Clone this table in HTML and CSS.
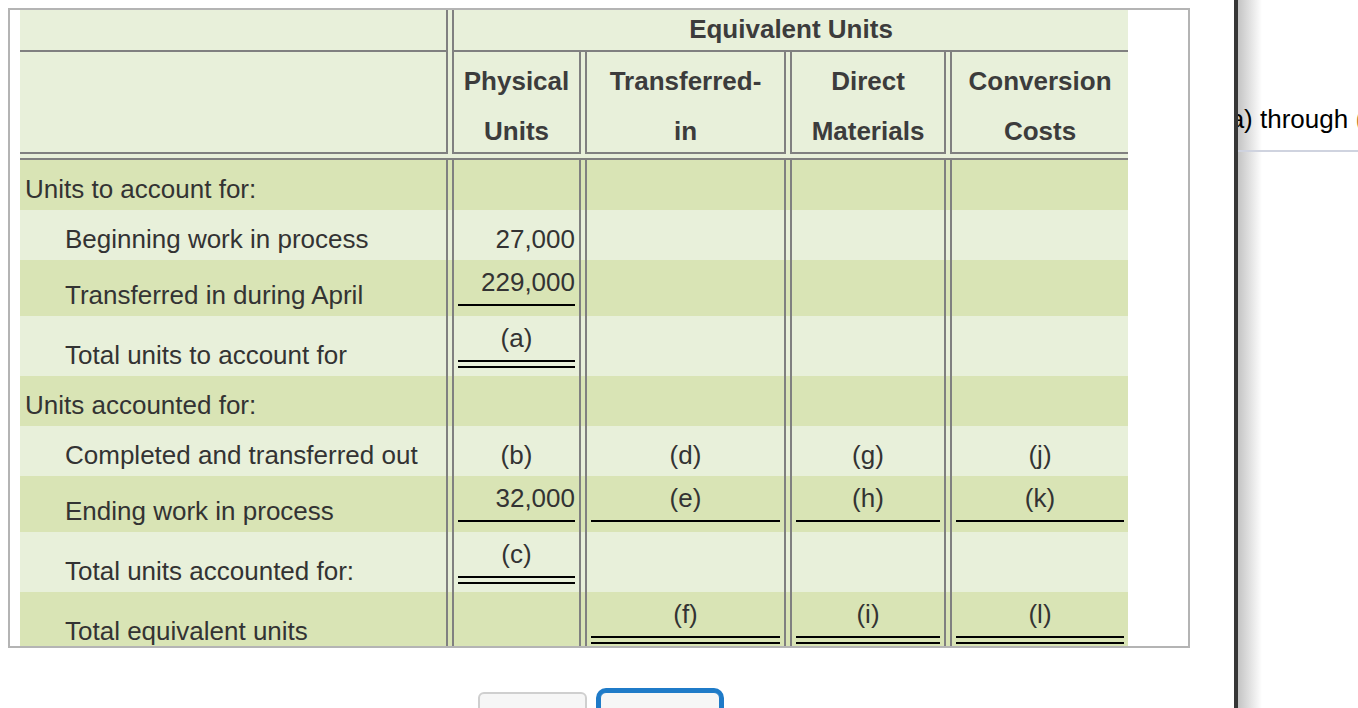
FILE: index.html
```html
<!DOCTYPE html>
<html>
<head>
<meta charset="utf-8">
<title>Equivalent Units</title>
<link rel="stylesheet" href="styles.css">
</head>
<body>
<div class="page">
  <div class="main">
    <div class="frame">
      <div class="tbl">
        <div class="hrow h1">
          <div class="c lab"></div>
          <div class="c span">Equivalent Units</div>
        </div>
        <div class="hrow h2">
          <div class="c lab"></div>
          <div class="c phys">Physical<br>Units</div>
          <div class="c tin">Transferred-<br>in</div>
          <div class="c dm">Direct<br>Materials</div>
          <div class="c cc">Conversion<br>Costs</div>
        </div>
        <div class="hgap"></div>
        <div class="body">
          <div class="row dark r50">
            <div class="c lab">Units to account for:</div>
            <div class="c phys"></div>
            <div class="c tin"></div>
            <div class="c dm"></div>
            <div class="c cc"></div>
          </div>
          <div class="row light r50">
            <div class="c lab ind">Beginning work in process</div>
            <div class="c phys num">27,000</div>
            <div class="c tin"></div>
            <div class="c dm"></div>
            <div class="c cc"></div>
          </div>
          <div class="row dark r56">
            <div class="c lab ind">Transferred in during April</div>
            <div class="c phys u num"><div class="ul">229,000</div></div>
            <div class="c tin"></div>
            <div class="c dm"></div>
            <div class="c cc"></div>
          </div>
          <div class="row light r60">
            <div class="c lab ind">Total units to account for</div>
            <div class="c phys u ctr"><div class="dbl"><div class="ul">(a)</div></div></div>
            <div class="c tin"></div>
            <div class="c dm"></div>
            <div class="c cc"></div>
          </div>
          <div class="row dark r50">
            <div class="c lab">Units accounted for:</div>
            <div class="c phys"></div>
            <div class="c tin"></div>
            <div class="c dm"></div>
            <div class="c cc"></div>
          </div>
          <div class="row light r50">
            <div class="c lab ind">Completed and transferred out</div>
            <div class="c phys ctr">(b)</div>
            <div class="c tin ctr">(d)</div>
            <div class="c dm ctr">(g)</div>
            <div class="c cc ctr">(j)</div>
          </div>
          <div class="row dark r56">
            <div class="c lab ind">Ending work in process</div>
            <div class="c phys u num"><div class="ul">32,000</div></div>
            <div class="c tin u ctr"><div class="ul">(e)</div></div>
            <div class="c dm u ctr"><div class="ul">(h)</div></div>
            <div class="c cc u ctr"><div class="ul">(k)</div></div>
          </div>
          <div class="row light r60">
            <div class="c lab ind">Total units accounted for:</div>
            <div class="c phys u ctr"><div class="dbl"><div class="ul">(c)</div></div></div>
            <div class="c tin"></div>
            <div class="c dm"></div>
            <div class="c cc"></div>
          </div>
          <div class="row dark r60">
            <div class="c lab ind">Total equivalent units</div>
            <div class="c phys"></div>
            <div class="c tin u ctr"><div class="dbl"><div class="ul">(f)</div></div></div>
            <div class="c dm u ctr"><div class="dbl"><div class="ul">(i)</div></div></div>
            <div class="c cc u ctr"><div class="dbl"><div class="ul">(l)</div></div></div>
          </div>
        </div>
      </div>
    </div>
    <div class="btns">
      <button class="btn" type="button"></button>
      <button class="btn focus" type="button"></button>
    </div>
  </div>
  <div class="panel">
    <div class="ptext">(a) through <span class="tail">(l)</span></div>
  </div>
</div>
</body>
</html>
```

FILE: styles.css
```css
* {
  box-sizing: border-box;
}

body {
  margin: 0;
  background: #fff;
  color: #333;
  font-family: "Liberation Sans", Arial, Helvetica, sans-serif;
}

.page {
  display: flex;
  height: 708px;
  overflow: hidden;
}

.main {
  flex: none;
  width: 1234px;
  padding: 8px;
}

.frame {
  width: 1182px;
  height: 640px;
  border: 2px solid #b4b4b4;
  padding-left: 10px;
  overflow: hidden;
}

.tbl {
  width: 1108px;
  font-size: 26px;
}

.hrow,
.row {
  display: flex;
  gap: 4px;
}

.hrow,
.hgap {
  background: #e8f0da;
}

.hgap {
  height: 4px;
}

.c {
  flex: none;
  border: 0 solid #808080;
}

.lab {
  width: 428px;
  border-right-width: 2px;
}

.span {
  width: 676px;
  border-left-width: 2px;
}

.phys {
  width: 129px;
  border-left-width: 2px;
  border-right-width: 2px;
}

.tin {
  width: 201px;
  border-left-width: 2px;
  border-right-width: 2px;
}

.dm {
  width: 156px;
  border-left-width: 2px;
  border-right-width: 2px;
}

.cc {
  width: 178px;
  border-left-width: 2px;
}

.h1 .c {
  height: 42px;
  border-bottom-width: 2px;
  line-height: 38px;
  text-align: center;
  font-weight: bold;
  color: #3c3c3c;
}

.h2 .c {
  height: 102px;
  border-bottom-width: 2px;
  padding-top: 4px;
  line-height: 50px;
  text-align: center;
  font-weight: bold;
  color: #3c3c3c;
}

.body {
  border-top: 2px solid #808080;
}

.dark {
  background: #d9e4b5;
}

.light {
  background: #e8f0da;
}

.r50 {
  height: 50px;
}

.r56 {
  height: 56px;
}

.r60 {
  height: 60px;
}

.row .c {
  display: flex;
  flex-direction: column;
  justify-content: flex-end;
  padding: 0 4px 6px;
  line-height: 30px;
  white-space: nowrap;
}

.row .lab {
  padding-left: 5px;
}

.row .lab.ind {
  padding-left: 45px;
}

.row .c.u {
  justify-content: flex-start;
  padding-top: 7px;
  padding-bottom: 0;
}

.ul {
  line-height: 30px;
  padding-bottom: 7px;
  border-bottom: 2px solid #000;
}

.dbl {
  border-bottom: 2px solid #000;
  padding-bottom: 4px;
}

.num {
  text-align: right;
}

.ctr {
  text-align: center;
}

.btns {
  display: flex;
  justify-content: center;
  gap: 13px;
  width: 1182px;
  margin-top: 44px;
}

.btn {
  width: 109px;
  height: 40px;
  border: 2px solid #cfcfcf;
  border-radius: 6px;
  background: #f6f6f6;
  padding: 0;
}

.btn.focus {
  width: 120px;
  border: 1px solid #1f7bc8;
  box-shadow: 0 0 0 4px #1f7bc8;
}

.panel {
  flex: 1;
  border-left: 4px solid #363636;
  background: linear-gradient(90deg, #c4c4c4 0, #fff 24px);
  overflow: hidden;
}

.ptext {
  margin-left: -17px;
  padding: 104px 0 16px;
  border-bottom: 2px solid #cfd3df;
  font-size: 26px;
  line-height: 30px;
  color: #000;
  white-space: nowrap;
}

.tail {
  color: #c07a33;
}
```
